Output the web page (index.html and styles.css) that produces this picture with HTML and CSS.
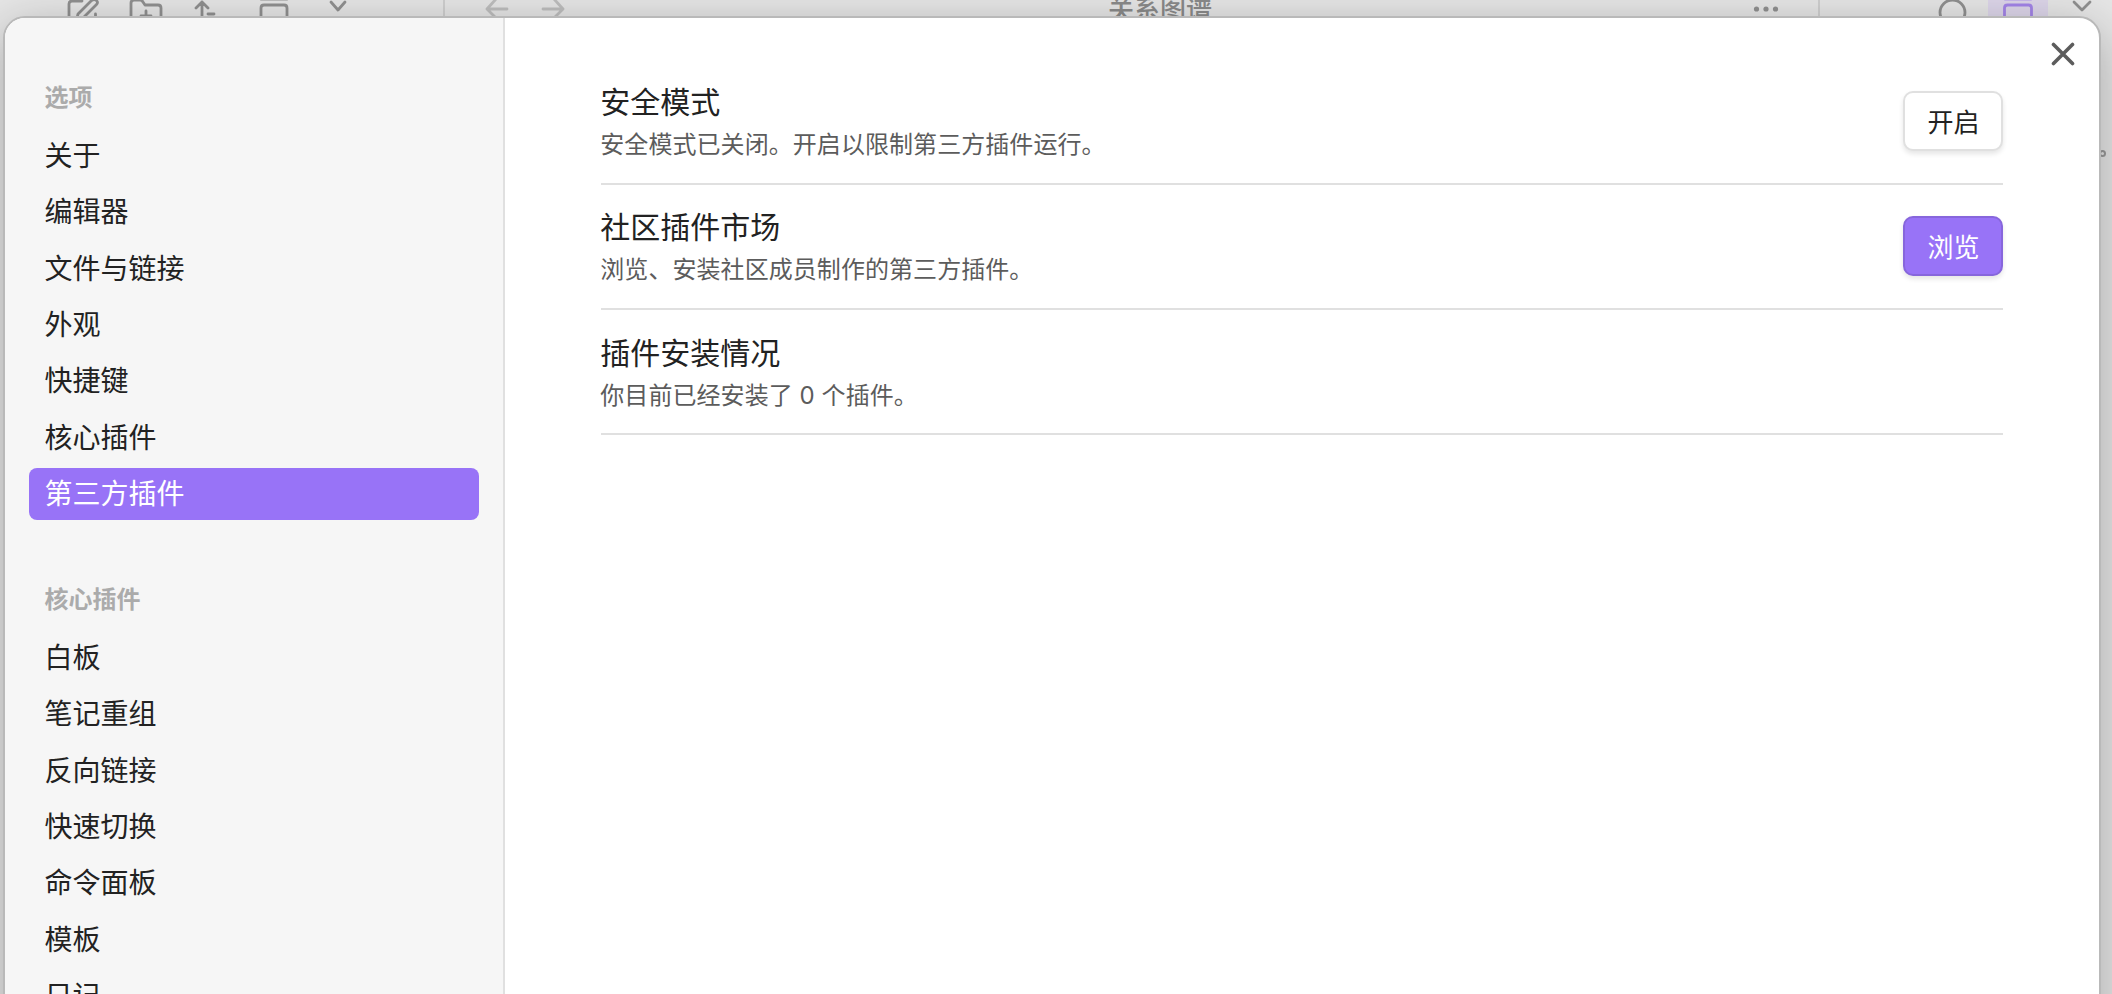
FILE: index.html
```html
<!doctype html>
<html lang="zh-CN">
<head>
  <meta charset="utf-8"/>
  <title>设置</title>
  <meta name="viewport" content="width=device-width, initial-scale=1"/>
  <link rel="stylesheet" href="styles.css">
</head>
<body>
  <!-- window behind the dialog -->
  <div class="backdrop">
    <svg class="toolbar" width="2112" height="18" viewBox="0 0 2112 18">
      <path class="divider" d="M444 0v18M1819 0v18"/>
      <rect class="tab-active" x="1988" y="0" width="60" height="18"/>
      <g class="icon">
        <path d="M82 1H72q-3 0-3 3v16M77 18l1-4L91.500 .5q3-2 5 0 2 2 0 4L83 18M95.500 14v5"/>
        <path d="M131 20V3q0-3 3-3h6q2 0 3 2l2 3h13q3 0 3 3v12M146 11v8M141 16h10"/>
        <path d="M202 20V2M196 8l6-6 6 6M208 14h6"/>
        <path d="M261 20V8q0-3 3-3h20q3 0 3 3v12"/>
        <path d="M331 2l7 8 7-8"/>
        <circle cx="1952.500" cy="12.500" r="12.500"/>
        <path d="M2074 2l8 8 8-8"/>
      </g>
      <g class="icon faint">
        <path class="soft" d="M261 0h26"/>
        <path d="M507 9h-20M496-1l-9 10 9 9M543 9h20M554-1l9 10-9 9"/>
      </g>
      <g class="icon accent">
        <path class="soft" d="M2005 0h26"/>
        <path d="M2004.500 20V8q0-3 3-3h21q3 0 3 3v12"/>
      </g>
      <g class="dots">
        <circle cx="1756.500" cy="9" r="2.600"/>
        <circle cx="1766" cy="9" r="2.600"/>
        <circle cx="1775.500" cy="9" r="2.600"/>
      </g>
    </svg>
    <div class="view-title">关系图谱</div>
    <div class="node"></div>
  </div>

  <main class="modal">
    <nav class="sidebar">
      <section class="group">
        <h2>选项</h2>
        <a class="item">关于</a>
        <a class="item">编辑器</a>
        <a class="item">文件与链接</a>
        <a class="item">外观</a>
        <a class="item">快捷键</a>
        <a class="item">核心插件</a>
        <a class="item active">第三方插件</a>
      </section>
      <section class="group">
        <h2>核心插件</h2>
        <a class="item">白板</a>
        <a class="item">笔记重组</a>
        <a class="item">反向链接</a>
        <a class="item">快速切换</a>
        <a class="item">命令面板</a>
        <a class="item">模板</a>
        <a class="item">日记</a>
      </section>
    </nav>

    <div class="content">
      <div class="setting">
        <div class="info">
          <div class="name">安全模式</div>
          <div class="desc">安全模式已关闭。开启以限制第三方插件运行。</div>
        </div>
        <button>开启</button>
      </div>
      <div class="setting">
        <div class="info">
          <div class="name">社区插件市场</div>
          <div class="desc">浏览、安装社区成员制作的第三方插件。</div>
        </div>
        <button class="cta">浏览</button>
      </div>
      <div class="setting">
        <div class="info">
          <div class="name">插件安装情况</div>
          <div class="desc">你目前已经安装了 0 个插件。</div>
        </div>
      </div>
    </div>

    <svg class="close" width="24" height="24" viewBox="0 0 24 24"><path d="M2.500 2.500l19 19M21.500 2.500l-19 19"/></svg>
  </main>
</body>
</html>
```
FILE: styles.css
```css
:root{
  --accent:#9873f7;
  --text:#222;
  --muted:#5c5c5c;
  --faint:#ababab;
  --line:#e0e0e0;
}
*{box-sizing:border-box;margin:0;padding:0}
html,body{height:100%;overflow:hidden}
body{
  position:relative;
  padding:16px 11px 0 3px;
  background:#e6e6e6;
  color:var(--text);
  font-family:Inter,"Noto Sans CJK SC",sans-serif;
}

/* ---------- WINDOW BEHIND ---------- */
.backdrop{position:absolute;inset:0;overflow:hidden}
.toolbar{display:block}
.toolbar path,.toolbar circle{fill:none;stroke-width:2.8}
.toolbar .divider{stroke:#cfcfcf;stroke-width:2}
.toolbar .tab-active{fill:#ddd6ea}
.icon{stroke:#909090;stroke-linecap:round;stroke-linejoin:round}
.icon.faint{stroke:#bebebe}
.icon.accent{stroke:#a384e8}
.icon .soft{stroke-width:2}
.icon.accent .soft{stroke:#c9b8ec}
.toolbar .dots circle{fill:#909090}
.view-title{
  position:absolute;
  left:1108px;
  top:-9px;
  font-size:26px;
  font-weight:500;
  line-height:38px;
  color:#8a8a8a;
}
.node{
  position:absolute;
  left:2099px;
  top:150px;
  width:7px;
  height:7px;
  border:2px solid #999;
  border-radius:50%;
}

/* ---------- DIALOG ---------- */
.modal{
  position:relative;
  display:flex;
  height:1100px;
  border:2px solid #b9b9b9;
  border-radius:22px;
  background:#fff;
  overflow:hidden;
  box-shadow:0 12px 50px rgba(0,0,0,.28);
}
.close{
  position:absolute;
  top:24px;
  right:24px;
  fill:none;
  stroke:var(--muted);
  stroke-width:3.6;
  stroke-linecap:round;
}

.sidebar{
  width:500px;
  flex-shrink:0;
  padding:57px 24px 0;
  border-right:2px solid var(--line);
  background:#f6f6f6;
}
.group{margin-bottom:56px}
.group h2{
  padding:7px 15.5px 16px;
  font-size:24px;
  font-weight:600;
  line-height:31.2px;
  color:var(--faint);
}
.group + .group h2{padding-top:8px}
.item{
  display:block;
  margin-bottom:4px;
  padding:8.5px 15.5px 7.5px;
  border-radius:8px;
  font-size:28px;
  line-height:36.4px;
}
.item.active{background:var(--accent);color:#fff}

.content{flex:1;padding:64px 96px 0 96px}
.setting{
  display:flex;
  align-items:center;
  justify-content:space-between;
  height:125px;
  border-bottom:2px solid var(--line);
}
.setting:first-child{height:103px;padding-bottom:22px}
.info{margin-left:-.7px}
.name{font-size:30px;line-height:39px}
.desc{
  margin-top:7px;
  font-size:24px;
  line-height:31.2px;
  letter-spacing:.06px;
  color:var(--muted);
}
.setting:last-child .info{padding-top:2px}
button{
  width:100px;
  height:60px;
  margin-bottom:2px;
  padding-left:1px;
  border:2px solid var(--line);
  border-radius:10px;
  background:#fff;
  color:var(--text);
  font:inherit;
  font-size:26px;
  box-shadow:0 3px 5px rgba(0,0,0,.1);
}
button.cta{background:var(--accent);border-color:#8766dc;color:#fff}
```
